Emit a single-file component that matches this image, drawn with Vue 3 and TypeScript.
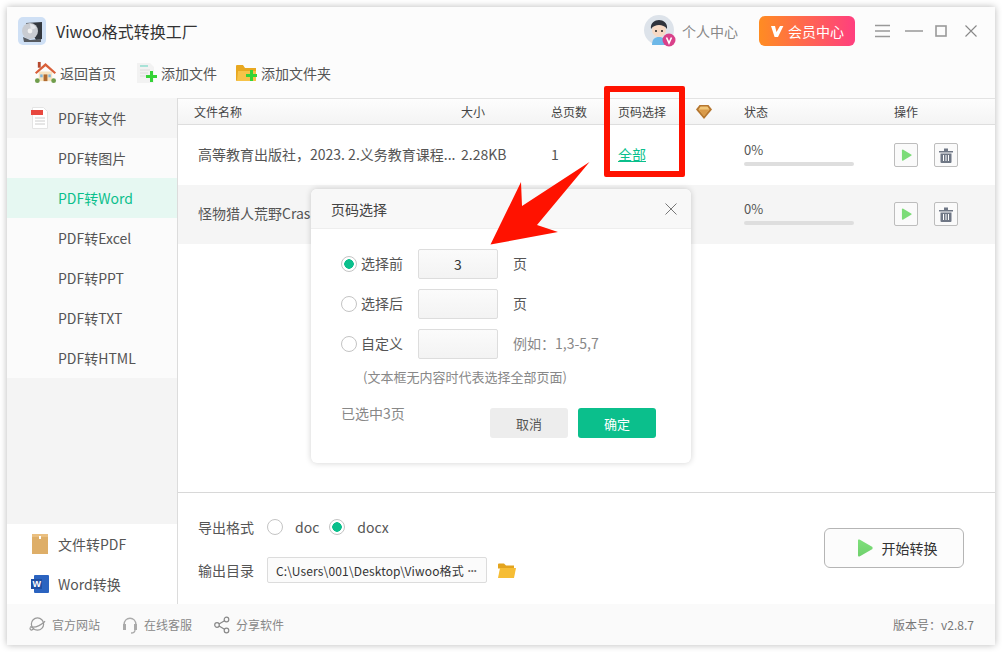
<script setup lang="ts">
import { ref } from 'vue'

const pdfTools = ['PDF转图片', 'PDF转Word', 'PDF转Excel', 'PDF转PPT', 'PDF转TXT', 'PDF转HTML']
const activeTool = ref('PDF转Word')

const files = [
  { name: '高等教育出版社，2023. 2.义务教育课程...', size: '2.28KB', pages: '1', range: '全部', progress: 0 },
  { name: '怪物猎人荒野Cras', size: '', pages: '', range: '', progress: 0 }
]

const pageMode = ref('front')
const frontPages = ref('3')
const backPages = ref('')
const customPages = ref('')
const format = ref('docx')
</script>

<template>
  <div class="page">
    <div class="window">
      <header class="titlebar">
        <svg class="logo" viewBox="0 0 28 28">
          <rect width="28" height="28" rx="5" fill="#cfe0f5" />
          <path d="M8 6l16-1v17l-6 1z" fill="#33383f" />
          <circle cx="12" cy="14" r="8" fill="#c9ccd2" />
          <circle cx="12" cy="14" r="2.4" fill="#f2f2f2" />
          <path d="M5 20l7 3 11-1v3H6z" fill="#565a60" />
          <path d="M12 7a7 7 0 0 1 6 4l-5 2z" fill="#e4e6ea" />
        </svg>
        <span class="app-name">Viwoo格式转换工厂</span>
        <div class="title-right">
          <svg class="avatar" viewBox="0 0 32 32">
            <circle cx="15" cy="15" r="15" fill="#dde3ea" />
            <path d="M8 30c0-6 3-8 7-8s7 2 7 8z" fill="#6db8e8" />
            <circle cx="15" cy="15" r="7" fill="#f8d9c4" />
            <path d="M7 14c-1-6 4-9 8-9s9 3 8 9c-2-3-5-4-8-4s-6 1-8 4z" fill="#30333c" />
            <circle cx="12" cy="16" r="1" fill="#222" />
            <circle cx="18" cy="16" r="1" fill="#222" />
            <circle cx="25" cy="25" r="6.5" fill="#d9418a" />
            <path d="M22.5 22.5l2.5 5.5 2.5-5.5" fill="none" stroke="#fff" stroke-width="1.6" />
          </svg>
          <span class="user-link">个人中心</span>
          <button class="vip-btn">
            <svg viewBox="0 0 14 14" width="14" height="14">
              <path d="M1 2h4l1.500 6L10 2h3.400L8 13H4.600z" fill="#fff" />
            </svg>
            <span>会员中心</span>
          </button>
          <div class="win-controls">
            <svg viewBox="0 0 15 14" width="15" height="14">
              <path d="M0 1.500h15M0 7h15M0 12.500h15" stroke="#999" stroke-width="1.500" />
            </svg>
            <svg viewBox="0 0 18 14" width="18" height="14">
              <path d="M0 7h18" stroke="#999" stroke-width="1.500" />
            </svg>
            <svg viewBox="0 0 12 12" width="12" height="12">
              <rect x="1" y="1" width="10" height="10" fill="none" stroke="#999" stroke-width="1.600" />
            </svg>
            <svg viewBox="0 0 12 12" width="12" height="12">
              <path d="M.5.500l11 11M11.500.500l-11 11" stroke="#888" stroke-width="1.100" />
            </svg>
          </div>
        </div>
      </header>

      <nav class="toolbar">
        <a class="tool home">
          <svg viewBox="0 0 24 24" width="23" height="23">
            <rect x="4" y="1" width="3" height="6" fill="#b5482f" />
            <path d="M5 11h14v10H5z" fill="#f7e3c0" />
            <path d="M12 2L1 12l1.500 1.500L12 5.500l9.500 8L23 12z" fill="#d9603a" />
            <rect x="10" y="14" width="4" height="7" fill="#b06a30" />
            <rect x="6.500" y="14" width="2.500" height="3" fill="#7fb4d8" />
            <rect x="15" y="14" width="2.500" height="3" fill="#7fb4d8" />
            <circle cx="3.500" cy="20.500" r="2.500" fill="#6f9d4c" />
            <circle cx="20.500" cy="20.500" r="2.500" fill="#6f9d4c" />
          </svg>
          <span>返回首页</span>
        </a>
        <a class="tool file">
          <svg viewBox="0 0 22 22" width="22" height="22">
            <path d="M1 1h13l4 4v16H1z" fill="#f2f2f2" />
            <path d="M4 4h8" stroke="#5fd3bd" stroke-width="1" />
            <path d="M4 8h10M4 11h8M4 14h7" stroke="#dcdcdc" stroke-width="1" />
            <path d="M14 9h3v4h4v3h-4v4h-3v-4h-4v-3h4z" fill="#35d337" />
          </svg>
          <span>添加文件</span>
        </a>
        <a class="tool folder">
          <svg viewBox="0 0 22 22" width="22" height="22">
            <path d="M0 4a1 1 0 0 1 1-1h6l2 3h11v13H1a1 1 0 0 1-1-1z" fill="#e8a820" />
            <path d="M2 9h18v10H1z" fill="#f7c348" />
            <path d="M14 8h3v4h4v3h-4v4h-3v-4h-4v-3h4z" fill="#35d337" />
          </svg>
          <span>添加文件夹</span>
        </a>
      </nav>

      <div class="body">
        <aside class="sidebar">
          <div class="side-item group">
            <svg class="side-icon" viewBox="0 0 18 22">
              <path d="M1.500.5h11l4 4v17h-15z" fill="#fff" stroke="#e4e4e4" />
              <rect x="0" y="3" width="12" height="5" fill="#e8483f" />
              <path d="M4 11h10M4 14h10M4 17h10" stroke="#ccc" />
            </svg>
            <span>PDF转文件</span>
          </div>
          <div
            v-for="tool in pdfTools"
            :key="tool"
            class="side-item"
            :class="{ active: tool === activeTool }"
            @click="activeTool = tool"
          >
            <span>{{ tool }}</span>
          </div>
          <div class="side-fill"></div>
          <div class="side-item plain">
            <svg class="side-icon" viewBox="0 0 18 22">
              <rect x="1" y="1" width="16" height="20" fill="#deae68" />
              <rect x="1" y="1" width="16" height="3" fill="#eabf80" />
              <rect x="8" y="3" width="2" height="3" fill="#fff" />
            </svg>
            <span>文件转PDF</span>
          </div>
          <div class="side-item plain">
            <svg class="side-icon" viewBox="0 0 18 18">
              <rect x="3" y="0" width="15" height="18" rx="1" fill="#2b63c0" />
              <rect x="0" y="4" width="11" height="10" fill="#1f4fa3" />
              <text x="1.500" y="12" class="word-mark">W</text>
            </svg>
            <span>Word转换</span>
          </div>
        </aside>

        <main class="content">
          <div class="table-head">
            <div class="col-name">文件名称</div>
            <div class="col-size">大小</div>
            <div class="col-pages">总页数</div>
            <div class="col-range">
              <span>页码选择</span>
              <svg class="diamond" viewBox="0 0 16 14" width="16" height="14">
                <path d="M3.500 0h9L16 4.500 8 14 0 4.500z" fill="#b5762f" />
                <path d="M4.500 1.500h7l2 3L8 11 2.500 4.500z" fill="#f1c678" />
                <path d="M2.500 4.500h11L8 11z" fill="#d99a4a" />
              </svg>
            </div>
            <div class="col-status">状态</div>
            <div class="col-ops">操作</div>
          </div>

          <div v-for="file in files" :key="file.name" class="table-row">
            <div class="col-name name-cell">{{ file.name }}</div>
            <div class="col-size">{{ file.size }}</div>
            <div class="col-pages">{{ file.pages }}</div>
            <div class="col-range"><a class="range-link">{{ file.range }}</a></div>
            <div class="col-status">
              <div class="percent">{{ file.progress }}%</div>
              <div class="bar"><div class="bar-fill" :style="{ width: file.progress + '%' }"></div></div>
            </div>
            <div class="col-ops">
              <button class="icon-btn">
                <svg viewBox="0 0 12 14" width="11" height="13">
                  <path d="M1 1.500a1 1 0 0 1 1.500-.8l9 5.500v.8l-9 5.500a1 1 0 0 1-1.500-.8z" fill="#7cdc78" />
                </svg>
              </button>
              <button class="icon-btn">
                <svg viewBox="0 0 14 15" width="14" height="15">
                  <path d="M0 3h14v1.500H0zM5 .5h4V3H5z" fill="#6f7785" />
                  <path d="M1.500 5.500h11V14a1 1 0 0 1-1 1h-9a1 1 0 0 1-1-1z" fill="#6f7785" />
                  <path d="M4.500 7v6M7 7v6M9.500 7v6" stroke="#fff" stroke-width="1" />
                </svg>
              </button>
            </div>
          </div>

          <div class="spacer"></div>

          <section class="output">
            <div class="output-fields">
              <div class="field">
                <span class="field-label">导出格式</span>
                <label class="radio wide" @click="format = 'doc'">
                  <i class="dot" :class="{ on: format === 'doc' }"></i><span>doc</span>
                </label>
                <label class="radio wide" @click="format = 'docx'">
                  <i class="dot" :class="{ on: format === 'docx' }"></i><span>docx</span>
                </label>
              </div>
              <div class="field">
                <span class="field-label">输出目录</span>
                <div class="path-box">
                  <span class="path-text">C:\Users\001\Desktop\Viwoo格式</span>
                  <span class="path-more">•••</span>
                </div>
                <svg class="path-folder" viewBox="0 0 18 15" width="18" height="15">
                  <path d="M0 1.500a1 1 0 0 1 1-1h5l2 2h8v3H0z" fill="#e3a41e" />
                  <path d="M2 5h16l-2 10H0z" fill="#f6bd35" />
                </svg>
              </div>
            </div>
            <button class="start-btn">
              <svg viewBox="0 0 15 18" width="15" height="18">
                <defs>
                  <linearGradient id="startPlay" x1="0" y1="0" x2="0" y2="1">
                    <stop offset="0" stop-color="#7fe07c" />
                    <stop offset="1" stop-color="#6fd06c" />
                  </linearGradient>
                </defs>
                <path d="M0 1.500A1 1 0 0 1 1.500.6l13 7.500v1.800l-13 7.500A1 1 0 0 1 0 16.500z" fill="url(#startPlay)" />
              </svg>
              <span>开始转换</span>
            </button>
          </section>
        </main>
      </div>

      <footer class="footer">
        <a class="foot-link">
          <svg viewBox="0 0 18 18" width="17" height="18">
            <circle cx="9" cy="8" r="6.500" fill="none" stroke="#999" stroke-width="1.300" />
            <path d="M1 11c5 1 11-1 16-6M5 13c-2 2-4 2-4-1" fill="none" stroke="#999" stroke-width="1.300" />
          </svg>
          <span>官方网站</span>
        </a>
        <a class="foot-link">
          <svg viewBox="0 0 16 18" width="16" height="18">
            <path d="M2 9c0-9 12-9 12 0" fill="none" stroke="#aaa" stroke-width="1.500" />
            <path d="M1 8h3v6H1zM12 8h3v6h-3z" fill="#aaa" />
            <path d="M13 14c0 2-2 3-4 3" fill="none" stroke="#aaa" stroke-width="1.300" />
          </svg>
          <span>在线客服</span>
        </a>
        <a class="foot-link">
          <svg viewBox="0 0 16 18" width="16" height="18">
            <circle cx="12.500" cy="3.500" r="2.300" fill="none" stroke="#888" stroke-width="1.200" />
            <circle cx="3" cy="9" r="2.300" fill="none" stroke="#888" stroke-width="1.200" />
            <circle cx="12.500" cy="14.500" r="2.300" fill="none" stroke="#888" stroke-width="1.200" />
            <path d="M5 8l5.500-3.300M5 10l5.500 3.300" stroke="#888" stroke-width="1.200" />
          </svg>
          <span>分享软件</span>
        </a>
        <span class="version">版本号：v2.8.7</span>
      </footer>

      <div class="dialog">
        <div class="dialog-head">
          <span>页码选择</span>
          <svg viewBox="0 0 12 12" width="12" height="12">
            <path d="M.5.500l11 11M11.500.500l-11 11" stroke="#777" stroke-width="1" />
          </svg>
        </div>
        <div class="dialog-body">
          <div class="page-row">
            <label class="radio" @click="pageMode = 'front'">
              <i class="dot" :class="{ on: pageMode === 'front' }"></i><span>选择前</span>
            </label>
            <input v-model="frontPages" class="page-input" />
            <span class="page-unit">页</span>
          </div>
          <div class="page-row">
            <label class="radio" @click="pageMode = 'back'">
              <i class="dot" :class="{ on: pageMode === 'back' }"></i><span>选择后</span>
            </label>
            <input v-model="backPages" class="page-input" />
            <span class="page-unit">页</span>
          </div>
          <div class="page-row">
            <label class="radio" @click="pageMode = 'custom'">
              <i class="dot" :class="{ on: pageMode === 'custom' }"></i><span>自定义</span>
            </label>
            <input v-model="customPages" class="page-input" />
            <span class="page-unit hint">例如：1,3-5,7</span>
          </div>
          <p class="note">(文本框无内容时代表选择全部页面)</p>
          <div class="dialog-foot">
            <span class="selected">已选中3页</span>
            <div class="dialog-actions">
              <button class="btn-cancel">取消</button>
              <button class="btn-ok">确定</button>
            </div>
          </div>
        </div>
      </div>

      <!-- red annotation over the screenshot -->
      <div class="mark-box"></div>
      <svg class="mark-arrow" viewBox="0 0 120 90" width="120" height="90">
        <path d="M0.500 86.500L31 24l1 24 67.500-44L47 67l21 7z" fill="#ff1200" />
      </svg>
    </div>
  </div>
</template>

<style>
html,
body {
  margin: 0;
  background: #fff;
}
</style>

<style scoped>
.page {
  width: 1002px;
  height: 652px;
  padding: 7px;
  box-sizing: border-box;
  font-family: "Noto Sans CJK SC", "Noto Sans", sans-serif;
  font-size: 14px;
  color: #555;
  overflow: hidden;
}

.window {
  position: relative;
  width: 988px;
  height: 638px;
  display: flex;
  flex-direction: column;
  background: #fcfcfc;
  box-shadow: 0 0 7px rgba(0, 0, 0, 0.28);
}

.titlebar {
  height: 40px;
  flex: none;
  display: flex;
  align-items: center;
  padding: 8px 18px 0 11px;
  box-sizing: border-box;
}

.logo {
  width: 28px;
  height: 28px;
  flex: none;
}

.app-name {
  margin-left: 10px;
  font-size: 16px;
  color: #333;
}

.title-right {
  margin-left: auto;
  display: flex;
  align-items: center;
}

.avatar {
  width: 32px;
  height: 32px;
}

.user-link {
  margin-left: 6px;
  color: #888;
}

.vip-btn {
  width: 96px;
  height: 30px;
  margin-left: 21px;
  display: flex;
  align-items: center;
  gap: 4px;
  border: 0;
  border-radius: 6px;
  background: linear-gradient(90deg, #ff8c22, #ff3f7f);
  color: #fff;
  font: inherit;
  padding: 0 0 0 11px;
}

.win-controls {
  margin-left: 20px;
  display: flex;
  align-items: center;
}

.win-controls svg:nth-child(2) {
  margin-left: 15px;
}

.win-controls svg:nth-child(3) {
  margin-left: 12px;
}

.win-controls svg:nth-child(4) {
  margin-left: 18px;
}

.toolbar {
  height: 51px;
  flex: none;
  display: flex;
  align-items: center;
  padding-left: 27px;
}

.tool {
  display: flex;
  align-items: center;
  color: #555;
}

.tool.file {
  margin-left: 20px;
}

.tool.folder {
  margin-left: 19px;
}

.tool svg {
  margin-right: 3px;
}

.body {
  flex: 1;
  display: flex;
  min-height: 0;
}

.sidebar {
  width: 170px;
  flex: none;
  display: flex;
  flex-direction: column;
  background: #fbfbfb;
  border-right: 1px solid #dcdcdc;
  box-sizing: content-box;
}

.side-item {
  position: relative;
  height: 40px;
  flex: none;
  display: flex;
  align-items: center;
  padding-left: 51px;
  color: #555;
}

.side-item.group {
  background: #f5f5f5;
}

.side-item.active {
  background: #e6f8f2;
  color: #0bbf8c;
}

.side-item.plain {
  background: #fff;
}

.side-icon {
  position: absolute;
  left: 24px;
  top: 9px;
  width: 18px;
  height: 22px;
}

.word-mark {
  font-family: "Liberation Sans", sans-serif;
  font-size: 9px;
  font-weight: 700;
  fill: #fff;
}

.side-fill {
  flex: 1;
  background: #f4f4f4;
}

.content {
  flex: 1;
  min-width: 0;
  display: flex;
  flex-direction: column;
  background: #fff;
  border-top: 1px solid #e3e3e3;
}

.table-head,
.table-row {
  display: flex;
  align-items: center;
}

.table-head {
  height: 25px;
  flex: none;
  font-size: 12px;
  color: #444;
  background: linear-gradient(#fdfdfd, #f4f4f4);
  border-bottom: 1px solid #dedede;
}

.table-row {
  height: 60px;
  flex: none;
  box-sizing: border-box;
  color: #555;
}

.table-row:nth-of-type(3) {
  height: 59px;
  padding-bottom: 1px;
  background: #f5f5f5;
}

.col-name {
  width: 283px;
  flex: none;
  padding-left: 16px;
  box-sizing: border-box;
}

.name-cell {
  padding-left: 20px;
  white-space: nowrap;
  overflow: hidden;
}

.table-row .name-cell,
.table-row .col-size,
.table-row .col-pages,
.range-link {
  margin-top: -2px;
}

.col-size {
  width: 90px;
  flex: none;
}

.col-pages {
  width: 67px;
  flex: none;
}

.col-range {
  width: 126px;
  flex: none;
  display: flex;
  align-items: center;
}

.diamond {
  margin-left: 30px;
}

.range-link {
  color: #0bbf8c;
  text-decoration: underline;
}

.col-status {
  width: 150px;
  flex: none;
}

.col-ops {
  display: flex;
  gap: 16px;
}

.percent {
  font-size: 13px;
  line-height: 16px;
  margin-top: -3px;
}

.bar {
  width: 110px;
  height: 4px;
  margin-top: 4px;
  border-radius: 2px;
  background: #dedede;
  overflow: hidden;
}

.bar-fill {
  height: 100%;
  background: #0bbf8c;
}

.icon-btn {
  width: 24px;
  height: 24px;
  padding: 0;
  display: flex;
  align-items: center;
  justify-content: center;
  background: #fafafa;
  border: 1px solid #bdbdbd;
  border-radius: 2px;
}

.spacer {
  flex: 1;
}

.output {
  height: 112px;
  flex: none;
  box-sizing: border-box;
  display: flex;
  justify-content: space-between;
  border-top: 1px solid #d8d8d8;
  padding: 21px 31px 0 20px;
}

.output-fields {
  display: flex;
  flex-direction: column;
  gap: 17px;
}

.field {
  height: 26px;
  display: flex;
  align-items: center;
}

.field-label {
  width: 69px;
  flex: none;
  color: #555;
}

.radio {
  display: flex;
  align-items: center;
  color: #555;
}

.radio.wide {
  margin-right: 10px;
}

.radio.wide .dot {
  margin-right: 12px;
}

.dot {
  width: 16px;
  height: 16px;
  box-sizing: border-box;
  margin-right: 4px;
  border: 1px solid #c4c4c4;
  border-radius: 50%;
  background: #fff;
  display: inline-block;
  flex: none;
}

.dot.on {
  background: radial-gradient(circle, #0bbf8c 0 4.500px, #fff 5px);
}

.path-box {
  width: 220px;
  height: 26px;
  box-sizing: border-box;
  display: flex;
  align-items: center;
  padding: 0 4px 0 8px;
  background: #fbfbfb;
  border: 1px solid #dcdcdc;
  border-radius: 2px;
  font-size: 12px;
  color: #333;
}

.path-text {
  width: 190px;
  white-space: nowrap;
  overflow: hidden;
  letter-spacing: 0.15px;
}

.path-more {
  margin-left: 2px;
  font-family: "Liberation Sans", sans-serif;
  font-size: 7px;
  color: #666;
  letter-spacing: 0.5px;
}

.path-folder {
  margin-left: 11px;
}

.start-btn {
  width: 140px;
  height: 40px;
  margin-top: 14px;
  display: flex;
  align-items: center;
  justify-content: center;
  gap: 9px;
  padding: 0 0 0 7px;
  background: #fcfcfc;
  border: 1px solid #b5b5b5;
  border-radius: 6px;
  color: #333;
  font: inherit;
}

.footer {
  height: 41px;
  flex: none;
  display: flex;
  align-items: center;
  padding: 0 21px 0 22px;
  background: #fafafa;
  font-size: 12px;
  color: #888;
}

.foot-link {
  display: flex;
  align-items: center;
  gap: 6px;
  margin-right: 22px;
}

.version {
  margin-left: auto;
  color: #777;
}

.dialog {
  position: absolute;
  left: 304px;
  top: 182px;
  width: 380px;
  height: 274px;
  background: #fff;
  border-radius: 6px;
  box-shadow: 0 0 6px rgba(0, 0, 0, 0.18);
  overflow: hidden;
}

.dialog-head {
  height: 40px;
  display: flex;
  align-items: center;
  justify-content: space-between;
  padding: 0 14px 0 20px;
  background: #f8f8f8;
  border-bottom: 1px solid #eee;
  box-sizing: border-box;
  color: #444;
}

.dialog-body {
  padding: 20px 35px 0 30px;
}

.page-row {
  height: 30px;
  display: flex;
  align-items: center;
  margin-bottom: 10px;
}

.page-row .radio {
  width: 77px;
}

.page-row .radio span {
  margin-top: -2px;
}

.page-row .dot {
  margin-right: 4px;
}

.page-input {
  width: 80px;
  height: 30px;
  box-sizing: border-box;
  padding: 0;
  text-align: center;
  font: inherit;
  color: #333;
  background: linear-gradient(#fbfbfb, #f3f3f3);
  border: 1px solid #ddd;
  border-radius: 2px;
  outline: none;
}

.page-unit {
  margin-left: 15px;
  margin-top: -2px;
}

.hint {
  color: #888;
}

.note {
  margin: -2px 0 0 22px;
  font-size: 13px;
  line-height: 20px;
  color: #888;
}

.dialog-foot {
  margin-top: 13px;
  display: flex;
  justify-content: space-between;
}

.selected {
  margin-top: 3px;
  line-height: 20px;
  color: #888;
}

.dialog-actions {
  display: flex;
  gap: 10px;
  margin-top: 8px;
}

.btn-cancel,
.btn-ok {
  width: 78px;
  height: 30px;
  padding: 0;
  border: 0;
  border-radius: 3px;
  font: inherit;
  font-size: 13px;
}

.btn-cancel {
  background: #ededed;
  color: #555;
}

.btn-ok {
  background: #0bbf8c;
  color: #fff;
}

.mark-box {
  position: absolute;
  left: 597px;
  top: 79px;
  width: 81px;
  height: 91px;
  box-sizing: border-box;
  border: 6px solid #ff1200;
  border-radius: 2px;
  pointer-events: none;
}

.mark-arrow {
  position: absolute;
  left: 483px;
  top: 151px;
  pointer-events: none;
}
</style>
